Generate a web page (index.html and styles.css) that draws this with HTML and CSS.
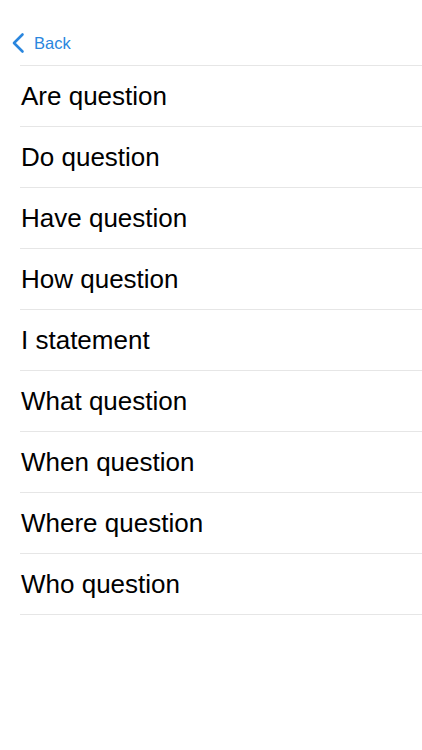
FILE: index.html
```html
<!DOCTYPE html>
<html lang="en">
<head>
<meta charset="utf-8">
<title>Questions</title>
<link rel="stylesheet" href="styles.css">
</head>
<body>
<div class="nav">
    <a class="back" href="#">
        <svg class="chevron" width="14" height="22" viewBox="0 0 14 22"><path d="M11.5 2.5 L3 11 L11.5 19.5" fill="none" stroke="#2a86de" stroke-width="2.6" stroke-linecap="round" stroke-linejoin="round"/></svg>
        <span>Back</span>
    </a>
</div>
<ul class="list">
    <li>Are question</li>
    <li>Do question</li>
    <li>Have question</li>
    <li>How question</li>
    <li>I statement</li>
    <li>What question</li>
    <li>When question</li>
    <li>Where question</li>
    <li>Who question</li>
</ul>
</body>
</html>
```
FILE: styles.css
```css
body {
    margin: 0;
    background: #fff;
    font-family: "Liberation Sans", Arial, sans-serif;
    color: #000;
}
.nav {
    height: 65px;
    display: flex;
    align-items: flex-start;
    padding: 32px 0 0 11px;
    box-sizing: border-box;
}
.back {
    display: flex;
    align-items: center;
    gap: 9px;
    color: #2a86de;
    text-decoration: none;
    font-size: 16.5px;
}
.chevron {display: block;}
.list {
    list-style: none;
    margin: 0 0 0 20px;
    padding: 0;
    border-top: 1px solid #e6e6e6;
}
.list li {
    height: 59px;
    line-height: 59px;
    padding: 1px 0 0 1px;
    font-size: 26px;
    border-bottom: 1px solid #e6e6e6;
}
```
